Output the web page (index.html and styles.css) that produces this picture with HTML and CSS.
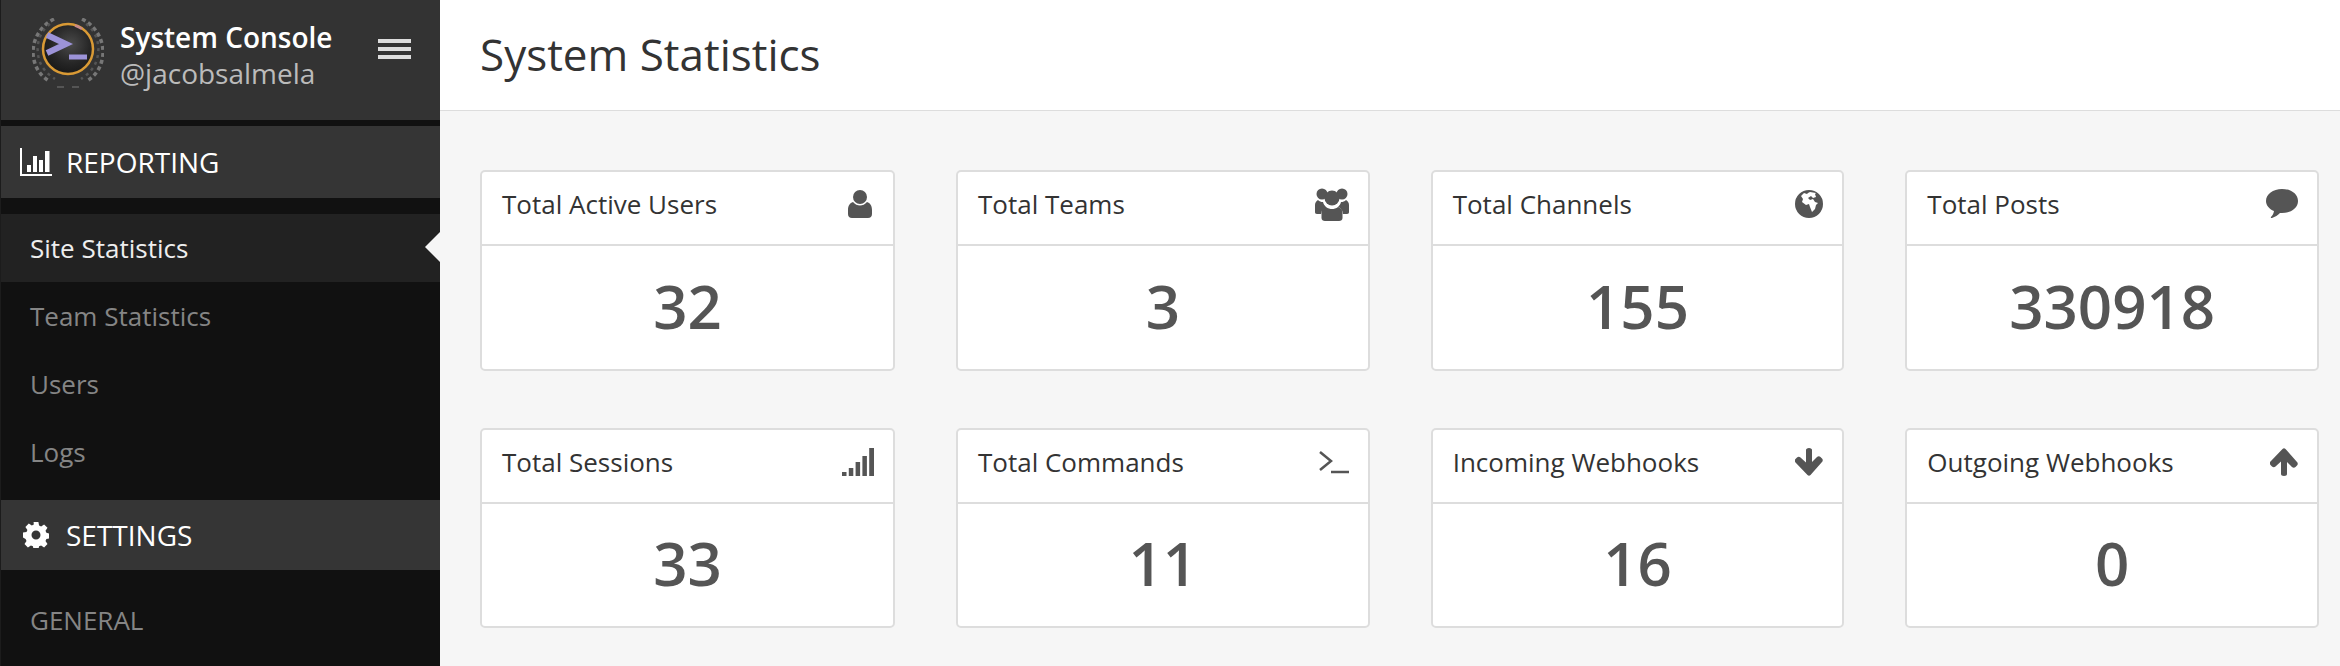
FILE: index.html
```html
<!DOCTYPE html>
<html lang="en">
<head>
<meta charset="utf-8">
<title>System Statistics</title>
<link rel="stylesheet" href="styles.css">
</head>
<body>
<div class="app">
  <aside class="sidebar">
    <header class="brand">
      <svg class="logo" viewBox="0 0 72 72" aria-hidden="true">
        <defs>
          <radialGradient id="disc" cx="0.55" cy="0.4" r="0.65">
            <stop offset="0" stop-color="#4a4a4a"/>
            <stop offset="0.6" stop-color="#262626"/>
            <stop offset="1" stop-color="#161616"/>
          </radialGradient>
        </defs>
        <g fill="none" stroke="#777" stroke-width="3.500" stroke-dasharray="4 3">
          <path d="M22 1C6 9-2 27 2 42c2 9 7 16 15 21"/>
          <path d="M50 1c16 8 24 26 20 41-2 9-7 16-15 21"/>
        </g>
        <g fill="none" stroke="#555" stroke-width="2.500" stroke-dasharray="3 4">
          <path d="M18 6C8 13 3 27 7 41c2 8 8 15 16 20"/>
          <path d="M54 6c10 7 15 21 11 35-2 8-8 15-16 20"/>
        </g>
        <path d="M25 69h7M40 69h7" stroke="#555" stroke-width="2"/>
        <circle cx="36" cy="31" r="25" fill="url(#disc)" stroke="#d99a35" stroke-width="2.500"/>
        <path d="M43 7.500a25 25 0 0 1 7 3.500" fill="none" stroke="#c98a8a" stroke-width="2.500"/>
        <path d="M15 17l19 9-19 9" fill="none" stroke="#9c93d8" stroke-width="6"/>
        <path d="M37 39h18" stroke="#9c93d8" stroke-width="5"/>
      </svg>
      <div class="brand-text">
        <div class="brand-title">System Console</div>
        <div class="brand-user">@jacobsalmela</div>
      </div>
      <div class="burger"><span></span><span></span><span></span></div>
    </header>
    <div class="section-head reporting">
      <svg class="section-icon" viewBox="0 0 32 28" aria-hidden="true"><path fill="#fff" d="M0 0h2v26h30v2H0zM7 17h4v7H7zM13 8h4v16h-4zM19 12h4v12h-4zM25 3h4.500v21H25z"/></svg>
      <span>REPORTING</span>
    </div>
    <nav class="menu">
      <a class="menu-item active">Site Statistics</a>
      <a class="menu-item">Team Statistics</a>
      <a class="menu-item">Users</a>
      <a class="menu-item">Logs</a>
    </nav>
    <div class="section-head settings">
      <svg class="section-icon gear" viewBox="0 0 26 26" aria-hidden="true"><path fill="#fff" fill-rule="evenodd" d="M10.600 0h4.800l.7 3.500 2 .9 3-2 3.400 3.400-2 3 .9 2 3.100.7v4.800l-3.100.7-.9 2 2 3-3.400 3.400-3-2-2 .9-.7 3.100h-4.800l-.7-3.100-2-.9-3 2-3.400-3.400 2-3-.9-2L0 15.400v-4.800l3.500-.7.9-2-2-3 3.400-3.400 3 2 2-.9zM13 8.500a4.500 4.500 0 1 0 0 9 4.500 4.500 0 0 0 0-9z"/></svg>
      <span>SETTINGS</span>
    </div>
    <div class="menu-group">GENERAL</div>
  </aside>
  <main class="main">
    <header class="page-head"><h1>System Statistics</h1></header>
    <section class="stats">
      <article class="card">
        <div class="card-head"><span>Total Active Users</span>
          <svg class="ico" viewBox="0 0 24 28"><circle cx="12" cy="7" r="7"/><path d="M5 12c2 2.500 4.500 3.500 7 3.500s5-1 7-3.500c3 1 5 3.500 5 8v4c0 2.500-1.500 4-4 4H4c-2.500 0-4-1.500-4-4v-4c0-4.500 2-7 5-8z"/></svg>
        </div>
        <div class="card-value">32</div>
      </article>
      <article class="card">
        <div class="card-head"><span>Total Teams</span>
          <svg class="ico teams" viewBox="0 0 34 34"><circle cx="7" cy="7" r="5.500"/><circle cx="27" cy="7" r="5.500"/><circle cx="17" cy="11" r="7.500"/><path d="M3 13c1.500 1.500 3 2 5 2 .5 2 1.500 3.500 3 5-3 1-5 4-5 7H2c-1.500 0-2-1-2-2v-7c0-2 1-4 3-5zM31 13c-1.500 1.500-3 2-5 2-.5 2-1.500 3.500-3 5 3 1 5 4 5 7h4c1.500 0 2-1 2-2v-7c0-2-1-4-3-5zM11 20c2 1.500 4 2 6 2s4-.5 6-2c3 .5 4.500 3.500 4.500 6.500V31c0 2-1.500 3-3.500 3H10c-2 0-3.500-1-3.500-3v-4.500c0-3 1.500-6 4.500-6.500z"/></svg>
        </div>
        <div class="card-value">3</div>
      </article>
      <article class="card">
        <div class="card-head"><span>Total Channels</span>
          <svg class="ico" viewBox="0 0 28 28"><path fill-rule="evenodd" d="M14 0a14 14 0 1 1 0 28 14 14 0 0 1 0-28zM9 3L6 6l2 3-1 3 4 3 3-1 1 3 2 5 3-3 1-4 2-2-3-1-2-3-3 1-2-2 3-2 2 2 3-1-1-3 1-1-6-1-2 1-1 1z"/></svg>
        </div>
        <div class="card-value">155</div>
      </article>
      <article class="card">
        <div class="card-head"><span>Total Posts</span>
          <svg class="ico wide" viewBox="0 0 32 30"><path d="M16 0c9 0 16 5 16 12s-7 12-16 12h-2c-2 2-5 4-8 5-1 .3-1.500-.5-1-1 1.500-1.500 2.500-3 3-6C3 20 0 16 0 12 0 5 7 0 16 0z"/></svg>
        </div>
        <div class="card-value">330918</div>
      </article>
      <article class="card">
        <div class="card-head"><span>Total Sessions</span>
          <svg class="ico wide" viewBox="0 0 32 28"><path d="M0 24h4.500v4H0zM6.800 20h4.500v8H6.800zM13.600 14h4.500v14h-4.500zM20.400 8h4.500v20h-4.500zM27.200 0H32v28h-4.800z"/></svg>
        </div>
        <div class="card-value">33</div>
      </article>
      <article class="card">
        <div class="card-head"><span>Total Commands</span>
          <svg class="ico term" viewBox="0 0 30 24"><path d="M1 2l11 9-11 9" fill="none" stroke="#555" stroke-width="2.500"/><path d="M12 22h18" stroke="#555" stroke-width="2.500"/></svg>
        </div>
        <div class="card-value">11</div>
      </article>
      <article class="card">
        <div class="card-head"><span>Incoming Webhooks</span>
          <svg class="ico" viewBox="0 0 28 28"><path d="M11 2c0-1 1-2 3-2s3 1 3 2v12l5-5c1-1 2.500-1 3.500 0l1.500 1.500c1 1 1 2.500 0 3.500L15.500 27c-1 1-2 1-3 0L.5 14.500c-1-1-1-2.500 0-3.500L2 9.500c1-1 2.500-1 3.500 0l5.500 5z"/></svg>
        </div>
        <div class="card-value">16</div>
      </article>
      <article class="card">
        <div class="card-head"><span>Outgoing Webhooks</span>
          <svg class="ico" viewBox="0 0 28 28"><path d="M11 26c0 1 1 2 3 2s3-1 3-2V14l5 5c1 1 2.500 1 3.500 0l1.500-1.500c1-1 1-2.500 0-3.500L15.500 1c-1-1-2-1-3 0L.5 13.500c-1 1-1 2.500 0 3.500L2 18.500c1 1 2.500 1 3.500 0l5.500-5z"/></svg>
        </div>
        <div class="card-value">0</div>
      </article>
    </section>
  </main>
</div>
</body>
</html>
```
FILE: styles.css
```css
* { box-sizing: border-box; }
html, body { margin: 0; height: 100%; overflow: hidden; }
body { font-family: "Open Sans", "Noto Sans", sans-serif; background: #f6f6f6; color: #333; }
.app { display: grid; grid-template-columns: 440px 1fr; height: 666px; }

.sidebar { background: #111; display: flex; flex-direction: column; overflow: hidden; border-left: 1px solid #1c1c1c; }
.brand { height: 120px; background: #333; display: flex; align-items: flex-start; padding: 18px 0 0 31px; flex: none; }
.logo { width: 72px; height: 72px; flex: none; }
.brand-text { margin-left: 16px; padding-top: 1px; }
.brand-title { font-size: 28px; font-weight: 600; line-height: 36px; color: #fff; }
.brand-user { font-size: 28px; line-height: 36px; color: #bbb; }
.burger { margin: 21px 0 0 45px; width: 33px; display: flex; flex-direction: column; gap: 4px; flex: none; }
.burger span { display: block; height: 4px; background: #ddd; }

.section-head { display: flex; align-items: center; background: #353535; color: #fff; font-size: 28px; flex: none; }
.section-head span { margin-left: 14px; }
.reporting { height: 72px; margin-top: 6px; padding-left: 19px; }
.settings { height: 70px; padding-left: 22px; }
.section-icon { width: 32px; height: 28px; flex: none; }
.gear { width: 26px; height: 26px; margin-right: 3px; }

.menu { background: #111; padding-top: 16px; padding-bottom: 14px; flex: none; }
.menu-item { display: flex; align-items: center; height: 68px; padding-left: 29px; font-size: 26px; color: #858585; }
.menu-item.active { color: #eee; background: #222; position: relative; }
.menu-item.active::after { content: ""; position: absolute; right: 0; top: 18px; border: 15px solid transparent; border-left-width: 0; border-right-color: #f6f6f6; }
.menu-group { padding: 30px 0 0 29px; font-size: 26px; line-height: 40px; color: #858585; }

.main { min-width: 0; }
.page-head { height: 111px; background: #fff; border-bottom: 1px solid #ddd; display: flex; align-items: center; padding: 0 0 2px 40px; }
.page-head h1 { margin: 0; font-size: 44px; font-weight: 400; color: #333; }
.stats { display: grid; grid-template-columns: 415px 1fr 1fr 1fr; grid-template-rows: 201px 200px; column-gap: 61px; row-gap: 57px; padding: 59px 21px 0 40px; }
.card { background: #fff; border: 2px solid #ddd; border-radius: 5px; display: flex; flex-direction: column; }
.card-head { height: 74px; border-bottom: 2px solid #ddd; display: flex; align-items: center; justify-content: space-between; padding: 0 19px 8px 20px; font-size: 26px; color: #333; flex: none; }
.ico { width: 28px; height: 28px; fill: #555; flex: none; }
.ico.wide { width: 32px; height: 30px; }
.ico.term { width: 30px; height: 24px; }
.ico.teams { width: 34px; height: 34px; }
.card-value { flex: 1; display: flex; align-items: center; justify-content: center; padding-bottom: 4px; font-size: 60px; font-weight: 600; color: #555; }
```
